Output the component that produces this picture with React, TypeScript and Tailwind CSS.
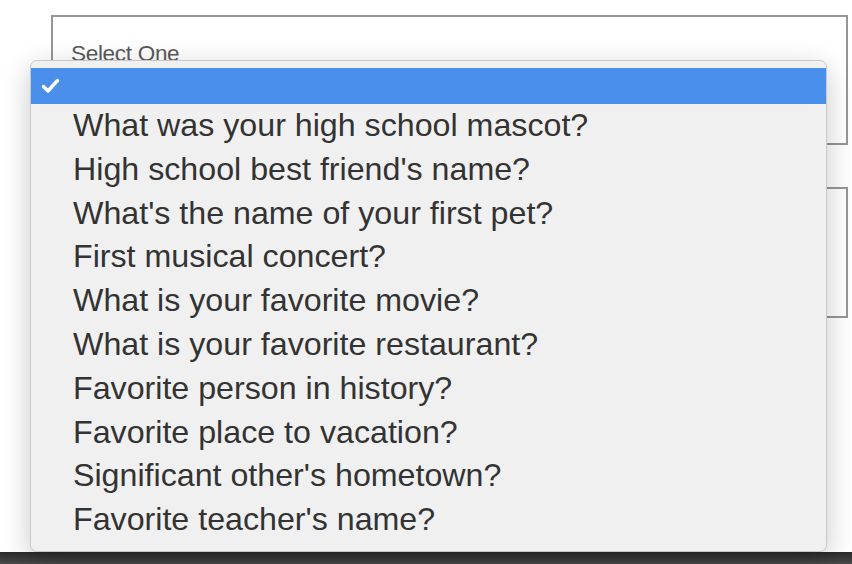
import { Fragment } from 'react';

const questions = [
  'What was your high school mascot?',
  "High school best friend's name?",
  "What's the name of your first pet?",
  'First musical concert?',
  'What is your favorite movie?',
  'What is your favorite restaurant?',
  'Favorite person in history?',
  'Favorite place to vacation?',
  "Significant other's hometown?",
  "Favorite teacher's name?",
];

const App = () => {
  return (
    <div className="relative flex h-[564px] w-[852px] flex-col overflow-hidden bg-white font-['Liberation_Sans',Arial,sans-serif]">
      {/* Form fields behind the menu */}
      <div className="flex-1 pl-[51px] pr-[4px] pt-[15px]">
        <div className="h-[130px] border-2 border-[#969696] px-[18px] pt-[24px]">
          <span className="block text-[22.5px] leading-[26px] tracking-[-0.3px] text-[#5a5a5a]">Select One</span>
        </div>
        <div className="mt-[42px] h-[131px] border-2 border-[#969696]" />
      </div>

      {/* Bottom bar */}
      <div className="h-[12px] bg-gradient-to-b from-[#2a2a2a] to-[#4a4a4a]" />

      {/* Open select menu */}
      <div className="absolute left-[30px] top-[60px] w-[797px] rounded-[7px] border border-[#c9c9c9] bg-[#f0f0f0] pb-[9px] pt-[7px] shadow-[0_8px_28px_rgba(0,0,0,0.22)]">
        <div className="flex h-[36px] items-center bg-[#4a90ea] pl-[10px]">
          <svg width="19" height="16" viewBox="0 0 19 16" fill="none">
            <path d="M2.5 8.5 L7 13 L16.5 2.5" stroke="white" strokeWidth="3.4" strokeLinecap="round" strokeLinejoin="round" />
          </svg>
        </div>
        {questions.map((q) => (
          <Fragment key={q}>
            <div className="h-[43.8px] pl-[42px] text-[32.2px] leading-[43.8px] text-[#333333]">
              {q}
            </div>
          </Fragment>
        ))}
      </div>
    </div>
  );
};

export default App;
